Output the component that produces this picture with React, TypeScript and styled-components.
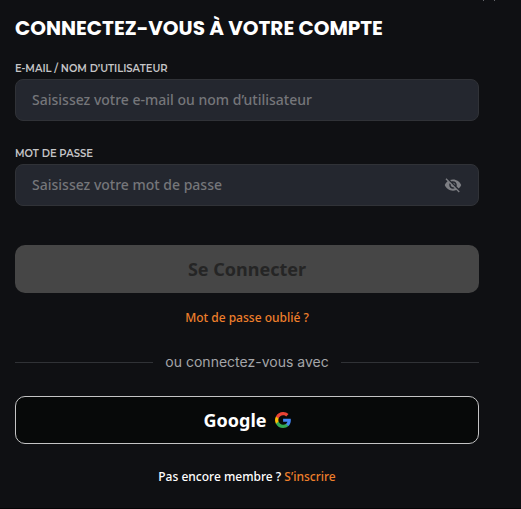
import React from "react";
import styled, { createGlobalStyle } from "styled-components";
import { MdVisibilityOff } from "react-icons/md";

const GlobalStyle = createGlobalStyle`
  *, *::before, *::after { box-sizing: border-box; }
  html, body { margin: 0; background: #0f1013; }
  body { font-family: "Noto Sans", sans-serif; color: #ffffff; }
  button, input { font: inherit; }
`;

const Panel = styled.main`
  position: relative;
  overflow: hidden;
  padding: 13px 42px 22px 15px;
  background: #0f1013;
  border-bottom: 1px solid #050506;
`;

const CloseButton = styled.button`
  position: absolute;
  top: -12px;
  right: 25px;
  display: flex;
  padding: 0;
  border: 0;
  background: none;
  color: #64656a;
`;

const Title = styled.h1`
  margin: 0 0 17px;
  font: 700 20px/30px Poppins, Inter, sans-serif;
  white-space: nowrap;
`;

const Form = styled.form`
  display: flex;
  flex-direction: column;
`;

const Field = styled.div`
  display: flex;
  flex-direction: column;
  gap: 1px;
  margin-bottom: 24px;
`;

const Label = styled.label`
  align-self: flex-start;
  color: #c5c5c7;
  font: 600 10px/18px Montserrat, Inter, sans-serif;
`;

const InputBox = styled.div`
  display: flex;
  align-items: center;
  height: 42px;
  padding: 0 16px;
  border: 1px solid #303237;
  border-radius: 8px;
  background: #24272f;
`;

const Input = styled.input`
  flex: 1;
  min-width: 0;
  padding: 0;
  border: 0;
  outline: 0;
  background: none;
  color: #ffffff;
  font-size: 14px;
  font-weight: 500;
  line-height: 20px;
  &::placeholder { color: #75767a; opacity: 1; }
`;

const IconButton = styled.button`
  display: flex;
  padding: 0;
  border: 0;
  background: none;
  color: #7d7e83;
`;

const BigButton = styled.button<{ $outlined?: boolean }>`
  display: flex;
  align-items: center;
  justify-content: center;
  gap: 8px;
  width: 100%;
  height: 48px;
  padding: 0;
  border: ${(p) => (p.$outlined ? "1px solid #c4c4c5" : "0")};
  border-radius: 10px;
  background: ${(p) => (p.$outlined ? "#070909" : "#464646")};
  color: ${(p) => (p.$outlined ? "#ffffff" : "#252525")};
  font-size: 18px;
  font-weight: 700;
  line-height: 24px;
`;

const Submit = styled(BigButton)`
  margin-top: 15px;
`;

const Note = styled.p`
  margin: 0;
  text-align: center;
  font-size: 12px;
  font-weight: 500;
  line-height: 18px;
`;

const Forgot = styled(Note)`
  margin: 16px 0 24px;
`;

const SignUp = styled(Note)`
  margin-top: 24px;
`;

const Link = styled.a`
  color: #ee7f2b;
  text-decoration: none;
`;

const Divider = styled.div`
  display: flex;
  align-items: center;
  gap: 12px;
  margin-bottom: 23px;
  color: #a4a5a8;
  font: 400 14px/22px Inter, sans-serif;
  white-space: nowrap;
  &::before, &::after {
    content: "";
    flex: 1;
    height: 1px;
    background: #303236;
  }
`;

function GoogleLogo() {
  return (
    <svg width="16" height="16" viewBox="0 0 48 48" aria-hidden="true">
      <path fill="#4285F4" d="M47.5 24.6c0-1.6-.1-3.2-.4-4.7H24.3v9.1h13.1c-.6 3-2.3 5.5-4.8 7.2v6h7.7c4.5-4.2 7.2-10.3 7.2-17.6z" />
      <path fill="#34A853" d="M24.3 48c6.5 0 11.900-2.100 16-5.800l-7.700-6c-2.200 1.500-5 2.400-8.300 2.400-6.300 0-11.600-4.200-13.500-9.900h-8v6.200C6.800 42.700 14.900 48 24.300 48z" />
      <path fill="#FBBC05" d="M10.800 28.700a14.500 14.500 0 0 1 0-9.300v-6.200h-8a24 24 0 0 0 0 21.700z" />
      <path fill="#EA4335" d="M24.300 9.500c3.500-.1 6.900 1.300 9.400 3.700l6.900-6.900A23.600 23.600 0 0 0 24.300 0C14.900 0 6.800 5.300 2.800 13.200l8 6.200c1.900-5.700 7.200-9.900 13.500-9.900z" />
    </svg>
  );
}

export default function App() {
  return (
    <>
      <GlobalStyle />
      <Panel>
        <CloseButton type="button" aria-label="Fermer">
          <svg width="14" height="14" viewBox="0 0 14 14" fill="none" stroke="currentColor" strokeWidth="1" aria-hidden="true">
            <path d="M1 1 13 13M13 1 1 13" />
          </svg>
        </CloseButton>
        <Title>CONNECTEZ-VOUS À VOTRE COMPTE</Title>
        <Form onSubmit={(e) => e.preventDefault()}>
          <Field>
            <Label htmlFor="login">E-MAIL / NOM D’UTILISATEUR</Label>
            <InputBox>
              <Input id="login" type="text" placeholder="Saisissez votre e-mail ou nom d’utilisateur" />
            </InputBox>
          </Field>
          <Field>
            <Label htmlFor="password">MOT DE PASSE</Label>
            <InputBox>
              <Input id="password" type="password" placeholder="Saisissez votre mot de passe" />
              <IconButton type="button" aria-label="Afficher le mot de passe">
                <MdVisibilityOff size={18} />
              </IconButton>
            </InputBox>
          </Field>
          <Submit type="submit" disabled>Se Connecter</Submit>
        </Form>
        <Forgot>
          <Link href="#oubli">Mot de passe oublié ?</Link>
        </Forgot>
        <Divider>ou connectez-vous avec</Divider>
        <BigButton type="button" $outlined>
          Google
          <GoogleLogo />
        </BigButton>
        <SignUp>
          Pas encore membre ? <Link href="#inscription">S’inscrire</Link>
        </SignUp>
      </Panel>
    </>
  );
}
